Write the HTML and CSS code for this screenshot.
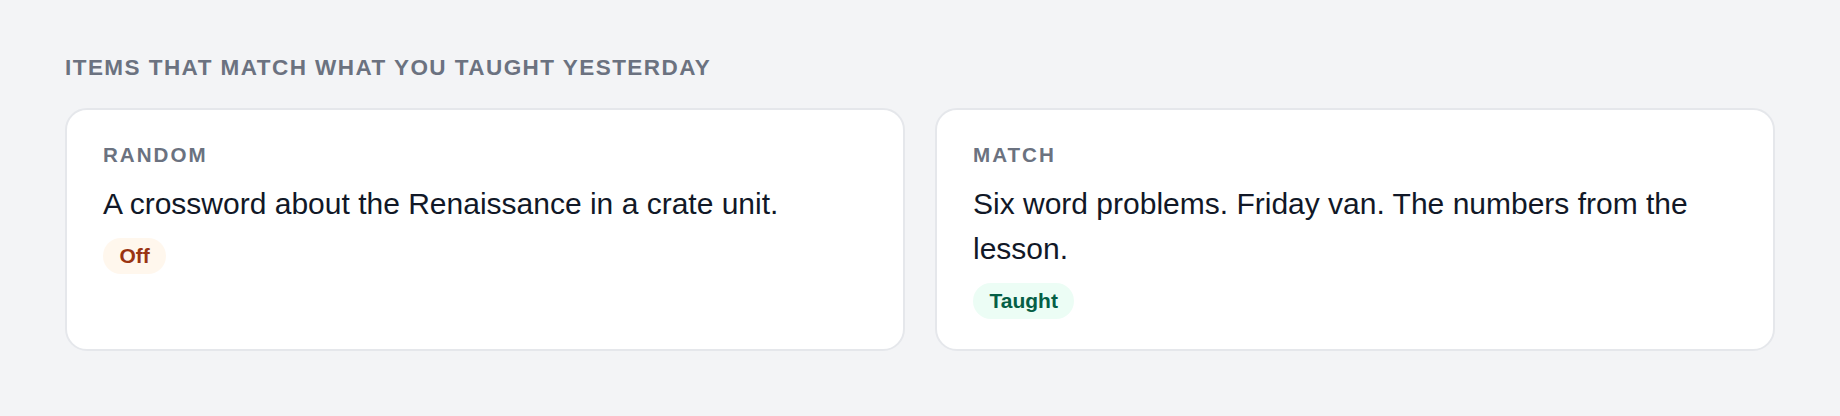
FILE: index.html
```html
<!DOCTYPE html>
<html lang="en">

<head>
    <meta charset="UTF-8">
    <meta name="viewport" content="width=device-width, initial-scale=1.0">
    <title>Yesterday's matches</title>
    <link rel="stylesheet" href="styles.css">
</head>

<body>
    <div class="main">
        <h2 class="title">Items that match what you taught yesterday</h2>

        <div class="cards">
            <div class="card">
                <div class="label">Random</div>
                <p class="text">A crossword about the Renaissance in a crate unit.</p>
                <span class="pill off">Off</span>
            </div>

            <div class="card">
                <div class="label">Match</div>
                <p class="text">Six word problems. Friday van. The numbers from the lesson.</p>
                <span class="pill taught">Taught</span>
            </div>
        </div>
    </div>
</body>

</html>
```

FILE: styles.css
```css
* {
    padding: 0;
    margin: 0;
    box-sizing: border-box;
    font-family: 'Liberation Sans', Arial, sans-serif;
}

body {
    background-color: #f3f4f6;
    min-height: 100vh;
}

.main {
    padding: 53px 65px 0;
}

.title {
    font-size: 22.5px;
    line-height: 30px;
    font-weight: bold;
    letter-spacing: 1.45px;
    text-transform: uppercase;
    color: #6b7280;
    margin-bottom: 25px;
}

.cards {
    display: grid;
    grid-template-columns: repeat(2, 1fr);
    gap: 30px;
}

.card {
    background-color: #fff;
    border: 2px solid #e5e7eb;
    border-radius: 22px;
    padding: 30px 36px;
}

.label {
    font-size: 20.6px;
    line-height: 30px;
    font-weight: bold;
    letter-spacing: 2px;
    text-transform: uppercase;
    color: #6b7280;
}

.text {
    margin-top: 11.25px;
    font-size: 30px;
    line-height: 45px;
    color: #111827;
}

.pill {
    display: inline-block;
    margin-top: 11.25px;
    padding: 4px 16.5px;
    font-size: 21px;
    line-height: 28px;
    font-weight: bold;
    border-radius: 999px;
}

.pill.off {
    background-color: #fff7ed;
    color: #9a3412;
}

.pill.taught {
    background-color: #ecfdf5;
    color: #065f46;
}
```
